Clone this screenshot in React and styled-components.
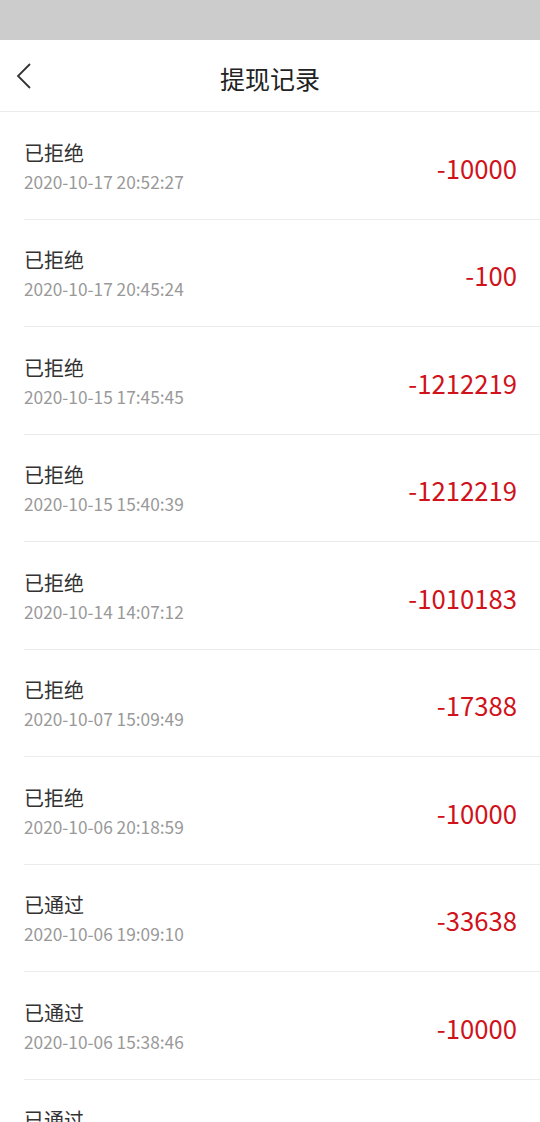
import React from 'react'
import styled, { createGlobalStyle } from 'styled-components'

const GlobalStyle = createGlobalStyle`
    html, body {
        margin: 0;
        padding: 0;
        background: #fff;
        font-family: "Noto Sans CJK SC", "Noto Sans", sans-serif;
        overflow: hidden;
    }
`

const Page = styled.div`
    width: 540px;
    height: 1122px;
    overflow: hidden;
    background: #fff;
`

const StatusBar = styled.div`
    height: 40px;
    background: #cccccc;
`

const Header = styled.div`
    position: relative;
    height: 71px;
    display: flex;
    align-items: center;
    justify-content: center;
    border-bottom: 1px solid #ececec;
`

const BackButton = styled.button`
    position: absolute;
    left: 12px;
    top: 50%;
    transform: translateY(-50%);
    width: 28px;
    height: 40px;
    padding: 0;
    border: none;
    background: none;
    display: flex;
    align-items: center;
    justify-content: center;
`

const Title = styled.h1`
    margin: 0;
    font-size: 25px;
    font-weight: 400;
    color: #222;
    padding-top: 4px;
`

const List = styled.ul`
    list-style: none;
    margin: 0;
    padding: 0 0 0 24px;
`

const Row = styled.li`
    box-sizing: border-box;
    height: 107.5px;
    display: flex;
    align-items: center;
    justify-content: space-between;
    padding: 4px 23px 0 0;
    border-bottom: 1px solid #ececec;
`

const Info = styled.div`
    display: flex;
    flex-direction: column;
    gap: 1px;
`

const Status = styled.span`
    font-size: 20px;
    line-height: 28px;
    color: #333;
`

const Time = styled.span`
    font-size: 17.3px;
    line-height: 28px;
    color: #999;
`

const Amount = styled.span`
    font-size: 25.7px;
    color: ${props => (props.negative ? '#d0121b' : '#333')};
`

const records = [
    { status: '已拒绝', time: '2020-10-17 20:52:27', amount: -10000 },
    { status: '已拒绝', time: '2020-10-17 20:45:24', amount: -100 },
    { status: '已拒绝', time: '2020-10-15 17:45:45', amount: -1212219 },
    { status: '已拒绝', time: '2020-10-15 15:40:39', amount: -1212219 },
    { status: '已拒绝', time: '2020-10-14 14:07:12', amount: -1010183 },
    { status: '已拒绝', time: '2020-10-07 15:09:49', amount: -17388 },
    { status: '已拒绝', time: '2020-10-06 20:18:59', amount: -10000 },
    { status: '已通过', time: '2020-10-06 19:09:10', amount: -33638 },
    { status: '已通过', time: '2020-10-06 15:38:46', amount: -10000 },
    { status: '已通过', time: '2020-10-05 11:20:03', amount: -10000 },
]

function App() {
    return (
        <Page>
            <GlobalStyle />
            <StatusBar />
            <Header>
                <BackButton aria-label="返回">
                    <svg width="20" height="30" viewBox="0 0 20 30">
                        <polyline points="14,3 2,15 14,27" fill="none" stroke="#333" strokeWidth="1.8" />
                    </svg>
                </BackButton>
                <Title>提现记录</Title>
            </Header>
            <List>
                {records.map((r, i) => (
                    <Row key={i}>
                        <Info>
                            <Status>{r.status}</Status>
                            <Time>{r.time}</Time>
                        </Info>
                        <Amount negative={r.amount < 0}>{r.amount}</Amount>
                    </Row>
                ))}
            </List>
        </Page>
    )
}

export default App
